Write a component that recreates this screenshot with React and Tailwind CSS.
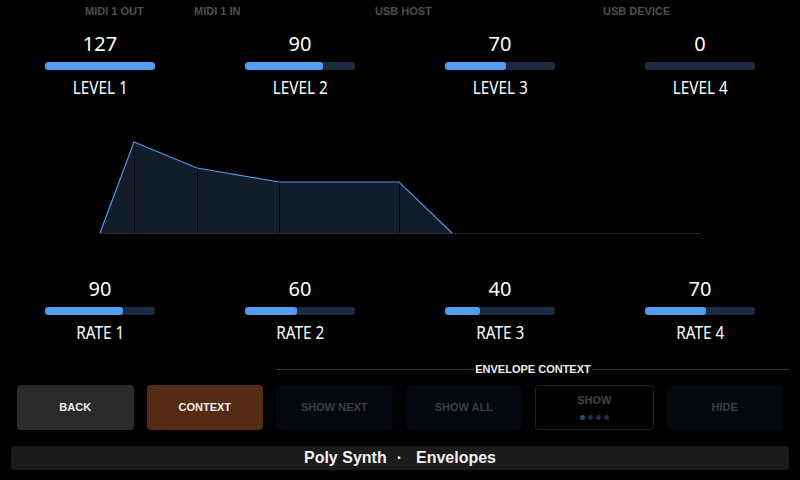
import React from "react";

const levels = [
  { v: 127, l: "LEVEL 1" },
  { v: 90, l: "LEVEL 2" },
  { v: 70, l: "LEVEL 3" },
  { v: 0, l: "LEVEL 4" },
];
const rates = [
  { v: 90, l: "RATE 1" },
  { v: 60, l: "RATE 2" },
  { v: 40, l: "RATE 3" },
  { v: 70, l: "RATE 4" },
];

const bigFont = { fontFamily: '"Noto Sans", "Open Sans", sans-serif' };

function Knob({ v, l }) {
  return (
    <div className="flex flex-col items-center">
      <div className="text-[20px] leading-[24px] text-white" style={bigFont}>
        {v}
      </div>
      <div className="mt-[6px] h-[8px] w-[110px] rounded-[3px] bg-[#1b2b40] overflow-hidden">
        <div className="h-full rounded-[3px] bg-[#529ded]" style={{ width: `${(v / 127) * 100}%` }} />
      </div>
      <div className="mt-[5px] text-[18px] leading-[24px] text-white scale-x-[0.85] whitespace-nowrap" style={bigFont}>
        {l}
      </div>
    </div>
  );
}

function Row({ items }) {
  return (
    <div className="grid grid-cols-4">
      {items.map((it) => (
        <Knob key={it.l} {...it} />
      ))}
    </div>
  );
}

function Envelope() {
  const pts = [
    [100, 233],
    [134, 142],
    [197, 168],
    [279, 182],
    [399, 182],
    [452, 233],
  ];
  const poly = pts.map((p) => p.join(",")).join(" ");
  return (
    <div className="h-[178px]">
      <svg width="800" height="178" viewBox="0 99 800 178" className="block">
        <line x1="100" y1="233.5" x2="700" y2="233.5" stroke="#2b2b2b" strokeWidth="1" />
        <polygon points={poly} fill="#121c2a" />
        {[134, 197, 279, 399].map((x) => (
          <line key={x} x1={x + 0.5} y1="142" x2={x + 0.5} y2="233" stroke="#000" strokeWidth="1" />
        ))}
        <polyline points={poly} fill="none" stroke="#4a9aeb" strokeWidth="1.2" />
      </svg>
    </div>
  );
}

function Btn({ children, cls, text }) {
  return (
    <div className={`flex-1 h-[45px] rounded-[4px] flex items-center justify-center text-[11px] font-bold ${cls} ${text}`}>
      {children}
    </div>
  );
}

export default function App() {
  const sans = { fontFamily: '"Liberation Sans", Arial, sans-serif' };
  return (
    <div className="w-[800px] h-[480px] bg-black overflow-hidden flex flex-col" style={sans}>
      <div className="h-[32px] pt-[5px] pl-[85px] flex text-[11px] leading-[13px] font-bold text-[#4f4f4f]">
        <span className="w-[109px]">MIDI 1 OUT</span>
        <span className="w-[181px]">MIDI 1 IN</span>
        <span className="w-[228px]">USB HOST</span>
        <span>USB DEVICE</span>
      </div>
      <Row items={levels} />
      <Envelope />
      <Row items={rates} />
      <div className="mt-[16px] h-[18px] ml-[276px] mr-[10px] flex items-center">
        <div className="flex-1 h-px bg-[#3a3a3a]" />
        <span className="px-[1px] text-[11px] font-bold text-[#f0f0f0] leading-[13px]">ENVELOPE CONTEXT</span>
        <div className="flex-1 h-px bg-[#3a3a3a]" />
      </div>
      <div className="mt-[7px] px-[17px] flex gap-[13px]">
        <Btn cls="bg-[#2a2a2a]" text="text-[#ededed]">BACK</Btn>
        <Btn cls="bg-[#552b14]" text="text-[#ededed]">CONTEXT</Btn>
        <Btn cls="bg-[#04070b]" text="text-[#3e3e3e]">SHOW NEXT</Btn>
        <Btn cls="bg-[#04070b]" text="text-[#3e3e3e]">SHOW ALL</Btn>
        <div className="flex-1 h-[45px] rounded-[4px] border border-[#16212c] bg-black flex flex-col items-center pt-[8px]">
          <span className="text-[11px] font-bold text-[#444] leading-[13px]">SHOW</span>
          <div className="mt-[8px] flex gap-[3px]">
            <span className="w-[5px] h-[5px] rounded-full bg-[#2b4b70]" />
            <span className="w-[5px] h-[5px] rounded-full bg-[#1b2b40]" />
            <span className="w-[5px] h-[5px] rounded-full bg-[#1b2b40]" />
            <span className="w-[5px] h-[5px] rounded-full bg-[#1b2b40]" />
          </div>
        </div>
        <Btn cls="bg-[#04070b]" text="text-[#3e3e3e]">HIDE</Btn>
      </div>
      <div className="mt-[16px] mx-[11px] h-[24px] rounded-[4px] bg-[#1b1b1b] flex items-center justify-center text-[16px] font-bold text-[#f2f2f2]">
        <span>Poly Synth</span>
        <span className="ml-[10px] mr-[14px]">·</span>
        <span>Envelopes</span>
      </div>
    </div>
  );
}
